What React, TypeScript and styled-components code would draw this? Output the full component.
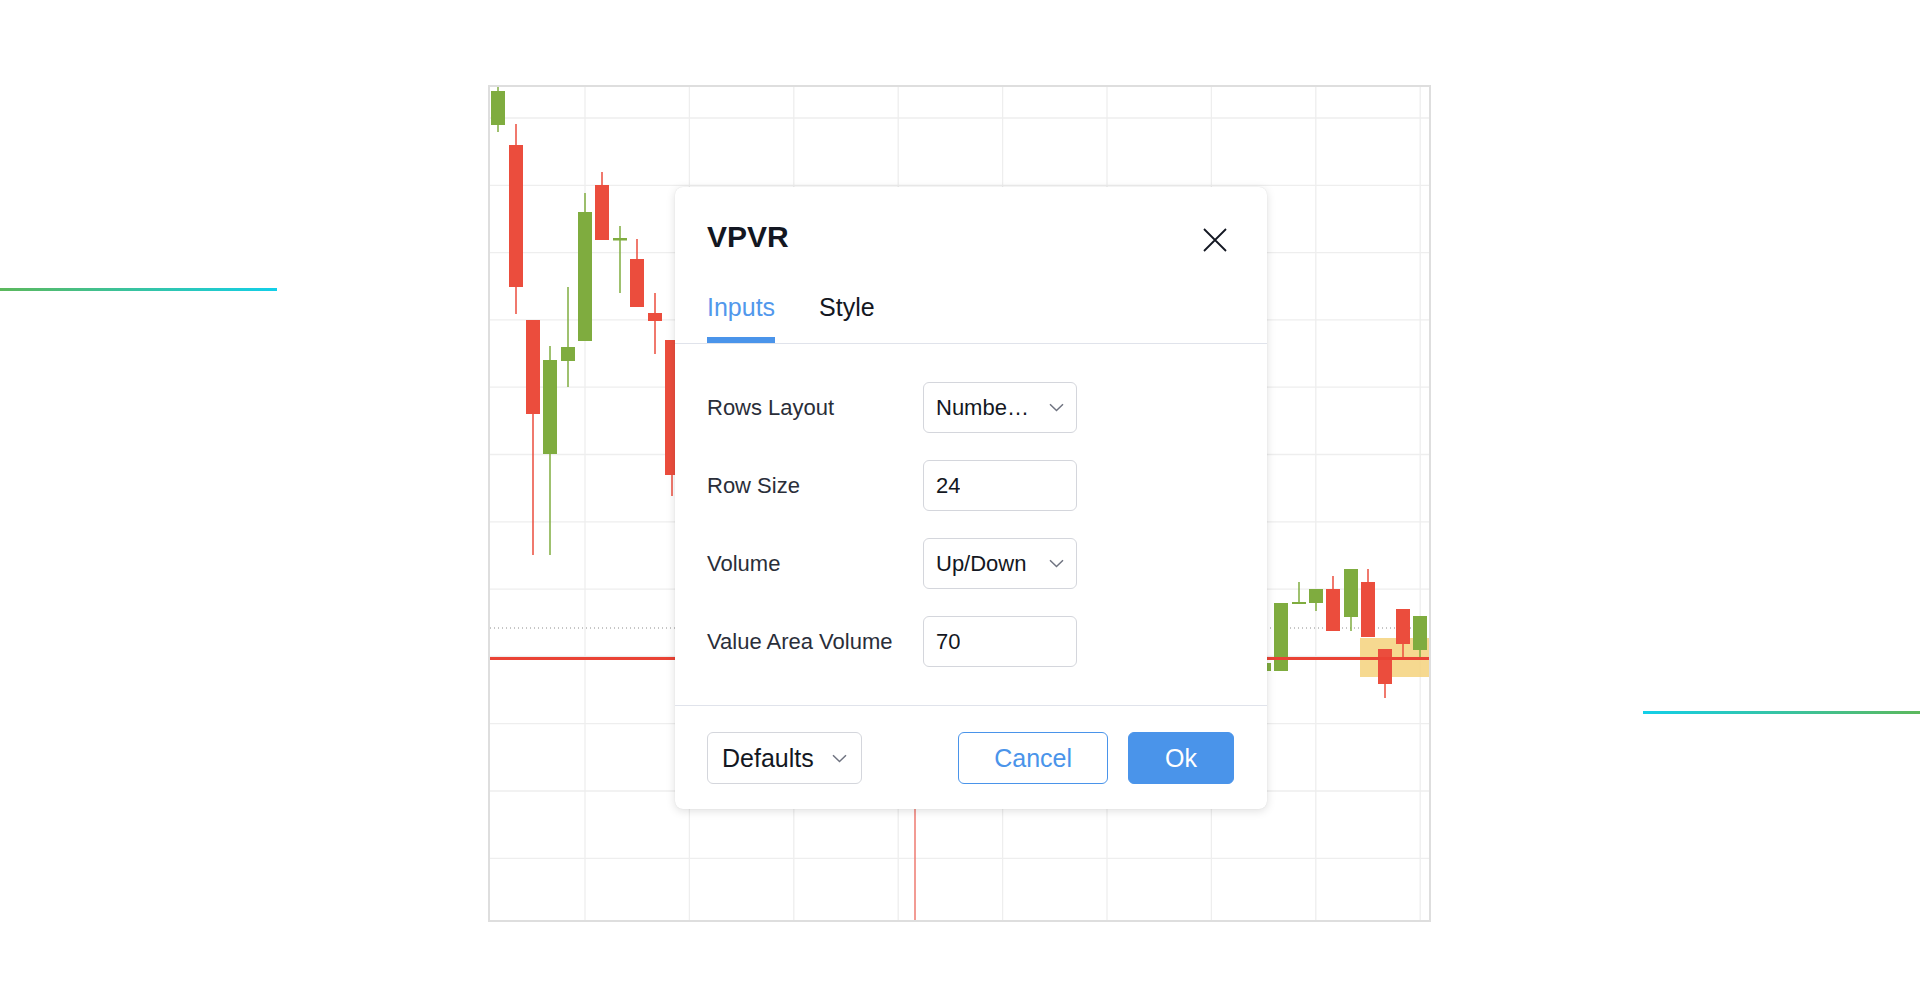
import React from "react";
import styled, { createGlobalStyle } from "styled-components";

const GlobalStyle = createGlobalStyle`
  html, body {
    margin: 0;
    padding: 0;
    background: #ffffff;
  }
  body {
    font-family: "Liberation Sans", Arial, Helvetica, sans-serif;
    color: #131722;
  }
`;

const BLUE = "#4a94ea";
const GREEN = "#7fac3f";
const RED = "#eb4d3d";

const Page = styled.div`
  width: 1920px;
  height: 1008px;
  box-sizing: border-box;
  padding-top: 85px;
  display: grid;
  grid-template-columns: 488px 943px 489px;
  align-items: start;
  overflow: hidden;
`;

const Accent = styled.div<{ $top: number; $left?: number; $reverse?: boolean }>`
  margin-top: ${(p) => p.$top}px;
  margin-left: ${(p) => p.$left || 0}px;
  width: 277px;
  height: 3px;
  background: linear-gradient(
    to ${(p) => (p.$reverse ? "left" : "right")},
    #5cb85c,
    #12cfe9
  );
`;

const ChartFrame = styled.div`
  position: relative;
  width: 939px;
  height: 833px;
  border: 2px solid #dedede;
`;

const ChartSvg = styled.svg`
  display: block;
  width: 939px;
  height: 833px;
`;

const Dialog = styled.div`
  position: absolute;
  left: 185px;
  top: 100px;
  width: 592px;
  height: 622px;
  box-sizing: border-box;
  background: #ffffff;
  border-radius: 8px;
  box-shadow: 0 2px 10px rgba(0, 0, 0, 0.13), 0 0 1px rgba(0, 0, 0, 0.12);
  display: flex;
  flex-direction: column;
`;

const Header = styled.div`
  padding: 30px 40px 0 32px;
  border-bottom: 1px solid #e0e3eb;
`;

const TitleRow = styled.div`
  display: flex;
  align-items: center;
  justify-content: space-between;
  height: 40px;
`;

const Title = styled.div`
  font-size: 30px;
  line-height: 40px;
  font-weight: 700;
  color: #131722;
`;

const CloseButton = styled.button`
  margin-top: 6px;
  width: 24px;
  height: 24px;
  padding: 0;
  border: none;
  background: none;
  display: flex;
  cursor: pointer;
`;

const Tabs = styled.div`
  display: flex;
  gap: 44px;
  margin-top: 35px;
`;

const Tab = styled.div<{ $active?: boolean }>`
  font-size: 25px;
  line-height: 30px;
  padding-bottom: 15px;
  border-bottom: 6px solid ${(p) => (p.$active ? BLUE : "transparent")};
  color: ${(p) => (p.$active ? "#5198ec" : "#131722")};
  cursor: pointer;
`;

const Body = styled.div`
  padding: 38px 33px 38px 32px;
  display: grid;
  grid-template-columns: 216px 154px;
  grid-auto-rows: 51px;
  row-gap: 27px;
  align-items: center;
`;

const Label = styled.div`
  font-size: 22px;
  color: #2a2e39;
  white-space: nowrap;
`;

const Field = styled.div`
  height: 51px;
  box-sizing: border-box;
  border: 1.5px solid #d4d6dc;
  border-radius: 6px;
  padding: 0 12px;
  display: flex;
  align-items: center;
  justify-content: space-between;
  font-size: 22px;
  color: #131722;
`;

const FieldText = styled.span`
  overflow: hidden;
  white-space: nowrap;
`;

const Footer = styled.div`
  border-top: 1px solid #e0e3eb;
  padding: 26px 33px 25px 32px;
  display: flex;
  align-items: center;
  gap: 20px;
`;

const Preset = styled.div`
  width: 155px;
  height: 52px;
  box-sizing: border-box;
  border: 1.5px solid #d4d6dc;
  border-radius: 6px;
  padding: 0 14px;
  display: flex;
  align-items: center;
  justify-content: space-between;
  font-size: 25px;
  color: #131722;
  margin-right: auto;
`;

const Button = styled.button<{ $primary?: boolean }>`
  height: 52px;
  box-sizing: border-box;
  padding: 0 ${(p) => (p.$primary ? 36 : 35)}px;
  border-radius: 6px;
  border: 1.5px solid ${BLUE};
  background: ${(p) => (p.$primary ? BLUE : "#ffffff")};
  color: ${(p) => (p.$primary ? "#ffffff" : BLUE)};
  font-family: inherit;
  font-size: 25px;
  cursor: pointer;
`;

const Chevron = () => (
  <svg width="15" height="9" viewBox="0 0 15 9" fill="none">
    <path d="M1 1.2 L7.5 7.5 L14 1.2" stroke="#6f7380" strokeWidth="1.5" />
  </svg>
);

// cx, bodyTop, bodyBottom, wickTop, wickBottom, up
type Candle = [number, number, number, number, number, boolean];

const candles: Candle[] = [
  [498, 91, 125, 86, 132, true],
  [516, 145, 287, 124, 314, false],
  [533, 320, 414, 320, 555, false],
  [550, 360, 454, 346, 555, true],
  [568, 347, 361, 287, 387, true],
  [585, 212, 341, 193, 341, true],
  [602, 185, 240, 172, 240, false],
  [620, 238, 240.5, 226, 293, true],
  [637, 259, 307, 239, 307, false],
  [655, 313, 321, 293, 354, false],
  [672, 340, 475, 340, 496, false],
  [1264, 663, 671, 663, 671, true],
  [1281, 603, 671, 603, 671, true],
  [1299, 602, 604, 582, 604, true],
  [1316, 589, 603, 589, 611, true],
  [1333, 589, 631, 576, 631, false],
  [1351, 569, 617, 569, 631, true],
  [1368, 582, 637, 569, 637, false],
  [1385, 649, 684, 649, 698, false],
  [1403, 609, 644, 609, 658, false],
  [1420, 616, 650, 616, 658, true],
];

const vLines = Array.from({ length: 9 }, (_, k) => 585 + 104.4 * k);
const hLines = Array.from({ length: 12 }, (_, k) => 118 + 67.3 * k);

const Chart = () => (
  <ChartSvg viewBox="490 87 939 833" preserveAspectRatio="none">
    {vLines.map((x) => (
      <line key={"v" + x} x1={x} x2={x} y1={87} y2={920} stroke="#eeeeee" strokeWidth="1.3" />
    ))}
    {hLines.map((y) => (
      <line key={"h" + y} x1={490} x2={1429} y1={y} y2={y} stroke="#eeeeee" strokeWidth="1.3" />
    ))}
    <rect x={1360} y={638} width={70} height={39} fill="#f5d27c" opacity={0.85} />
    <line x1={490} x2={1429} y1={628} y2={628} stroke="#8c8c8c" strokeWidth="1" strokeDasharray="1 3" />
    <line x1={915} x2={915} y1={658} y2={920} stroke="#ee7a70" strokeWidth="1.5" />
    {candles.map(([cx, bt, bb, wt, wb, up]) => {
      const c = up ? GREEN : RED;
      return (
        <g key={cx}>
          <line x1={cx} x2={cx} y1={wt} y2={wb} stroke={c} strokeWidth="1.5" />
          <rect x={cx - 7} y={bt} width={14} height={Math.max(bb - bt, 2)} fill={c} />
        </g>
      );
    })}
    <line x1={490} x2={1429} y1={658.5} y2={658.5} stroke="#ea4335" strokeWidth="3" />
  </ChartSvg>
);

const rows: { label: string; value: string; select?: boolean }[] = [
  { label: "Rows Layout", value: "Numbe\u2026", select: true },
  { label: "Row Size", value: "24" },
  { label: "Volume", value: "Up/Down", select: true },
  { label: "Value Area Volume", value: "70" },
];

const App: React.FC = () => {
  return (
    <>
      <GlobalStyle />
      <Page>
        <Accent $top={203} />
        <ChartFrame>
          <Chart />
          <Dialog>
            <Header>
              <TitleRow>
                <Title>VPVR</Title>
                <CloseButton aria-label="Close">
                  <svg width="24" height="24" viewBox="0 0 24 24" fill="none">
                    <path d="M1 1 L23 23 M23 1 L1 23" stroke="#131722" strokeWidth="1.8" />
                  </svg>
                </CloseButton>
              </TitleRow>
              <Tabs>
                <Tab $active>Inputs</Tab>
                <Tab>Style</Tab>
              </Tabs>
            </Header>
            <Body>
              {rows.map((r) => (
                <React.Fragment key={r.label}>
                  <Label>{r.label}</Label>
                  <Field>
                    <FieldText>{r.value}</FieldText>
                    {r.select && <Chevron />}
                  </Field>
                </React.Fragment>
              ))}
            </Body>
            <Footer>
              <Preset>
                <span>Defaults</span>
                <Chevron />
              </Preset>
              <Button>Cancel</Button>
              <Button $primary>Ok</Button>
            </Footer>
          </Dialog>
        </ChartFrame>
        <Accent $top={626} $left={212} $reverse />
      </Page>
    </>
  );
};

export default App;
